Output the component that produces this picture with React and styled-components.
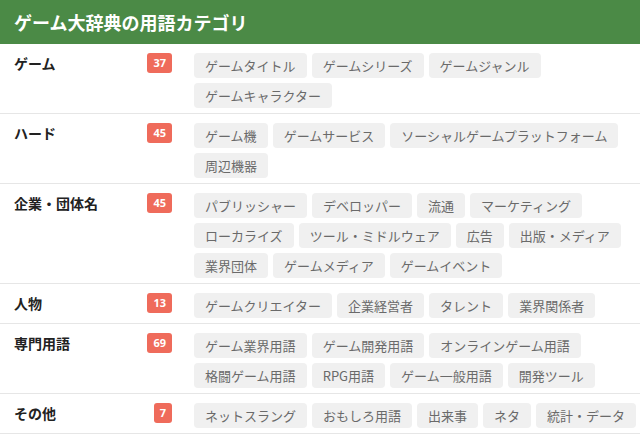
import React from "react";
import styled, { createGlobalStyle } from "styled-components";

const GlobalStyle = createGlobalStyle`
  body {
    margin: 0;
    background: #fff;
    font-family: "Noto Sans CJK JP", "Noto Sans", sans-serif;
  }
`;

const Panel = styled.div`
  width: 640px;
`;

const Header = styled.div`
  height: 44px;
  background: #4b8a46;
  color: #fff;
  display: flex;
  align-items: center;
  padding-left: 14px;
  font-size: 18px;
  font-weight: bold;
`;

const Row = styled.div`
  display: flex;
  padding: 9px 0 5px;
  border-bottom: 1px solid #e6e6e6;
`;

const Head = styled.div`
  width: 172px;
  padding-left: 14px;
  box-sizing: border-box;
  display: flex;
  justify-content: space-between;
  align-items: flex-start;
  flex-shrink: 0;
`;

const Label = styled.div`
  font-size: 14px;
  font-weight: bold;
  color: #222;
  line-height: 20px;
`;

const Badge = styled.span`
  background: #ef6b5b;
  color: #fff;
  font-size: 11px;
  font-weight: bold;
  font-family: "Open Sans", sans-serif;
  height: 20px;
  line-height: 20px;
  padding: 0 6px;
  border-radius: 3px;
`;

const Tags = styled.div`
  flex: 1;
  display: flex;
  flex-wrap: wrap;
  gap: 5px;
  margin-left: 22px;
  padding-right: 1px;
`;

const Tag = styled.span`
  height: 25px;
  line-height: 25px;
  padding: 0 11px;
  background: #f0f0f0;
  border-radius: 4px;
  font-size: 13px;
  color: #6a6a6a;
  white-space: nowrap;
`;

const categories = [
  { name: "ゲーム", count: 37, tags: ["ゲームタイトル", "ゲームシリーズ", "ゲームジャンル", "ゲームキャラクター"] },
  { name: "ハード", count: 45, tags: ["ゲーム機", "ゲームサービス", "ソーシャルゲームプラットフォーム", "周辺機器"] },
  {
    name: "企業・団体名",
    count: 45,
    tags: [
      "パブリッシャー", "デベロッパー", "流通", "マーケティング", "ローカライズ",
      "ツール・ミドルウェア", "広告", "出版・メディア", "業界団体", "ゲームメディア", "ゲームイベント",
    ],
  },
  { name: "人物", count: 13, tags: ["ゲームクリエイター", "企業経営者", "タレント", "業界関係者"] },
  {
    name: "専門用語",
    count: 69,
    tags: ["ゲーム業界用語", "ゲーム開発用語", "オンラインゲーム用語", "格闘ゲーム用語", "RPG用語", "ゲーム一般用語", "開発ツール"],
  },
  { name: "その他", count: 7, tags: ["ネットスラング", "おもしろ用語", "出来事", "ネタ", "統計・データ"] },
];

export default function App() {
  return (
    <Panel>
      <GlobalStyle />
      <Header>ゲーム大辞典の用語カテゴリ</Header>
      {categories.map((c) => (
        <Row key={c.name}>
          <Head>
            <Label>{c.name}</Label>
            <Badge>{c.count}</Badge>
          </Head>
          <Tags>
            {c.tags.map((t) => (
              <Tag key={t}>{t}</Tag>
            ))}
          </Tags>
        </Row>
      ))}
    </Panel>
  );
}
